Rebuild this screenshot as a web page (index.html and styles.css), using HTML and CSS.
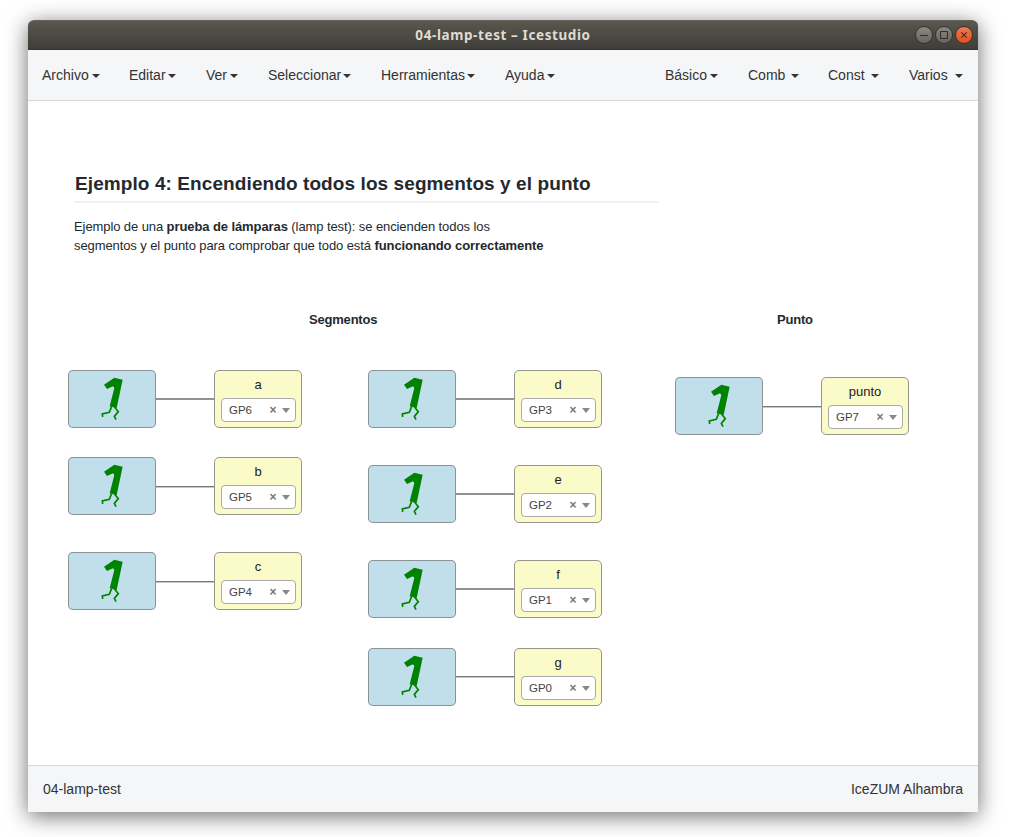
FILE: index.html
```html
<!DOCTYPE html>
<html lang="es">
<head>
<meta charset="utf-8">
<title>04-lamp-test – Icestudio</title>
<link rel="stylesheet" href="styles.css">
</head>
<body>
<svg class="defs" aria-hidden="true">
  <symbol id="one" viewBox="0 0 264 174">
    <path d="M108 44 139 23 164 29 146 114 125 109 139 54 135 49 117 57Z" fill="#008300"/>
    <path d="M131 109 124 127 103 132 104 141M139 110 151 125 139 139 144 149" fill="none" stroke="#008300" stroke-width="5"/>
  </symbol>
</svg>
<div class="window">
  <header class="titlebar">
    <span class="title">04-lamp-test – Icestudio</span>
    <div class="controls">
      <span class="ctl"><svg viewBox="0 0 18 18"><path d="M5 9.5h8"/></svg></span>
      <span class="ctl"><svg viewBox="0 0 18 18"><path d="M5.5 5.5h7v7h-7z"/></svg></span>
      <span class="ctl close"><svg viewBox="0 0 18 18"><path d="M6.3 6.3l5.4 5.4M11.7 6.3l-5.4 5.4"/></svg></span>
    </div>
  </header>
  <nav class="menubar">
    <div class="menu">
      <span class="item w-archivo">Archivo<i class="caret"></i></span>
      <span class="item w-editar">Editar<i class="caret"></i></span>
      <span class="item w-ver">Ver<i class="caret"></i></span>
      <span class="item w-sel">Seleccionar<i class="caret"></i></span>
      <span class="item w-herr">Herramientas<i class="caret"></i></span>
      <span class="item w-ayuda">Ayuda<i class="caret"></i></span>
    </div>
    <div class="menu">
      <span class="item w-basico">Básico<i class="caret"></i></span>
      <span class="item w-comb">Comb<i class="caret"></i></span>
      <span class="item w-const">Const<i class="caret"></i></span>
      <span class="item w-varios">Varios<i class="caret"></i></span>
    </div>
  </nav>
  <main class="canvas">
    <section class="intro">
      <h1>Ejemplo 4: Encendiendo todos los segmentos y el punto</h1>
      <p>Ejemplo de una <b>prueba de lámparas</b> (lamp test): se encienden todos los<br>segmentos y el punto para comprobar que todo está <b>funcionando correctamente</b></p>
    </section>
    <b class="label l-seg">Segmentos</b>
    <b class="label l-pun">Punto</b>
    <div class="pair p-a"><svg class="source"><use href="#one"/></svg><i class="wire"></i><div class="pin"><span>a</span><div class="select">GP6<b>×</b><i></i></div></div></div>
    <div class="pair p-b"><svg class="source"><use href="#one"/></svg><i class="wire low thin"></i><div class="pin"><span>b</span><div class="select">GP5<b>×</b><i></i></div></div></div>
    <div class="pair p-c"><svg class="source"><use href="#one"/></svg><i class="wire low thin"></i><div class="pin"><span>c</span><div class="select">GP4<b>×</b><i></i></div></div></div>
    <div class="pair p-d"><svg class="source"><use href="#one"/></svg><i class="wire"></i><div class="pin"><span>d</span><div class="select">GP3<b>×</b><i></i></div></div></div>
    <div class="pair p-e"><svg class="source"><use href="#one"/></svg><i class="wire"></i><div class="pin"><span>e</span><div class="select">GP2<b>×</b><i></i></div></div></div>
    <div class="pair p-f"><svg class="source"><use href="#one"/></svg><i class="wire"></i><div class="pin"><span>f</span><div class="select">GP1<b>×</b><i></i></div></div></div>
    <div class="pair p-g"><svg class="source"><use href="#one"/></svg><i class="wire thin"></i><div class="pin"><span>g</span><div class="select">GP0<b>×</b><i></i></div></div></div>
    <div class="pair p-punto"><svg class="source"><use href="#one"/></svg><i class="wire low thin"></i><div class="pin"><span>punto</span><div class="select">GP7<b>×</b><i></i></div></div></div>
  </main>
  <footer class="status"><span>04-lamp-test</span><span>IceZUM Alhambra</span></footer>
</div>
</body>
</html>
```
FILE: styles.css
```css
* { box-sizing: border-box; }
body {
  margin: 0;
  width: 1011px;
  height: 837px;
  padding: 20px 33px 25px 28px;
  overflow: hidden;
  background: #fff;
  color: #333;
  font: 14px/20px "Liberation Sans", Arial, sans-serif;
}
.defs { position: absolute; width: 0; height: 0; }
.window {
  display: flex;
  flex-direction: column;
  width: 950px;
  height: 792px;
  border-radius: 6px 6px 0 0;
  background: #fff;
  box-shadow: 0 4px 22px rgba(0, 0, 0, .58);
}
.titlebar {
  display: grid;
  grid-template-columns: 1fr auto 1fr;
  align-items: center;
  height: 30px;
  padding-right: 5px;
  border-top: 1px solid #66645a;
  border-bottom: 1px solid #353430;
  border-radius: 6px 6px 0 0;
  background: linear-gradient(#59574e, #3f3e3a);
}
.title {
  grid-column: 2;
  padding-left: 5px;
  color: #dfdbd2;
  font: bold 13.5px/20px "Noto Sans", sans-serif;
  letter-spacing: .6px;
  white-space: nowrap;
}
.controls { display: flex; justify-content: flex-end; gap: 2px; }
.ctl {
  width: 18px;
  height: 18px;
  border: 1px solid #34332f;
  border-radius: 50%;
  background: linear-gradient(#8b8981, #66655e);
}
.ctl svg { display: block; width: 18px; height: 18px; margin: -1px; fill: none; stroke: #33322e; stroke-width: 1.1; }
.close { background: linear-gradient(#f37a52, #e2501b); }
.menubar {
  display: flex;
  justify-content: space-between;
  height: 51px;
  padding: 15px 15px 0 14px;
  border-bottom: 1px solid #d3dadb;
  background: #f4f6f8;
}
.menu { display: flex; gap: 30px; }
.item { display: flex; justify-content: space-between; height: 20px; white-space: nowrap; }
.caret { margin-top: 9px; border: 4px solid transparent; border-top-color: #333; border-bottom: 0; height: 0; }
.w-archivo { width: 58px; margin-right: -1px; }
.w-editar { width: 47px; }
.w-ver { width: 32px; }
.w-sel { width: 83px; }
.w-herr { width: 94px; }
.w-ayuda { width: 50px; }
.w-basico { width: 53px; }
.w-comb { width: 51px; margin-right: -1px; }
.w-const { width: 51px; }
.w-varios { width: 54px; }
.canvas { position: relative; flex: 1; padding: 71px 0 0 46px; }
.intro { width: 585px; color: #24292e; }
.intro h1 {
  margin: 0 0 14px;
  padding-left: 1px;
  height: 31px;
  border-bottom: 2px solid #f1f2f3;
  font: bold 19px/24px "Liberation Sans", Arial, sans-serif;
  letter-spacing: .09px;
  white-space: nowrap;
}
.intro p { margin: 0; font-size: 13px; line-height: 19px; letter-spacing: -.09px; white-space: nowrap; }
.label { position: absolute; font-size: 13px; color: #24292e; }
.l-seg { left: 281px; top: 209px; letter-spacing: -.2px; }
.l-pun { left: 749px; top: 209px; letter-spacing: -.2px; }
.pair { position: absolute; display: flex; align-items: center; width: 234px; height: 58px; }
.source { width: 88px; height: 58px; border-radius: 5px; background: #c1dfeb; box-shadow: inset 0 0 0 1px #8b9194; }
.wire { flex: 1; height: 2px; background: #929292; }
.thin { background: linear-gradient(#777 50%, #c8c8c8 50%); }
.low { margin-top: 2px; }
.pin {
  width: 88px;
  height: 58px;
  padding: 4px 5.5px 0;
  border: 1px solid #96968c;
  border-radius: 5px;
  background: #fbfac9;
  color: #222;
  font-size: 13px;
  text-align: center;
}
.pin > span { display: block; height: 23px; }
.select {
  display: flex;
  align-items: center;
  height: 24px;
  padding: 0 5px 0 7.5px;
  border: 1px solid #aaa;
  border-radius: 4px;
  background: #fff;
  color: #444;
  font-size: 11.5px;
}
.select b { margin-left: auto; padding-right: 5px; font-size: 12px; color: #777; }
.select i { margin-top: 1px; border: 4px solid transparent; border-top: 5px solid #888; border-bottom: 0; }
.p-a { left: 40px; top: 269px; }
.p-b { left: 40px; top: 356px; }
.p-c { left: 40px; top: 451px; }
.p-d { left: 340px; top: 269px; }
.p-e { left: 340px; top: 364px; }
.p-f { left: 340px; top: 459px; }
.p-g { left: 340px; top: 547px; }
.p-punto { left: 647px; top: 276px; }
.status {
  display: flex;
  justify-content: space-between;
  height: 47px;
  padding: 13px 15px 0;
  border-top: 1px solid #d3dadb;
  background: #f4f6f8;
}
```
